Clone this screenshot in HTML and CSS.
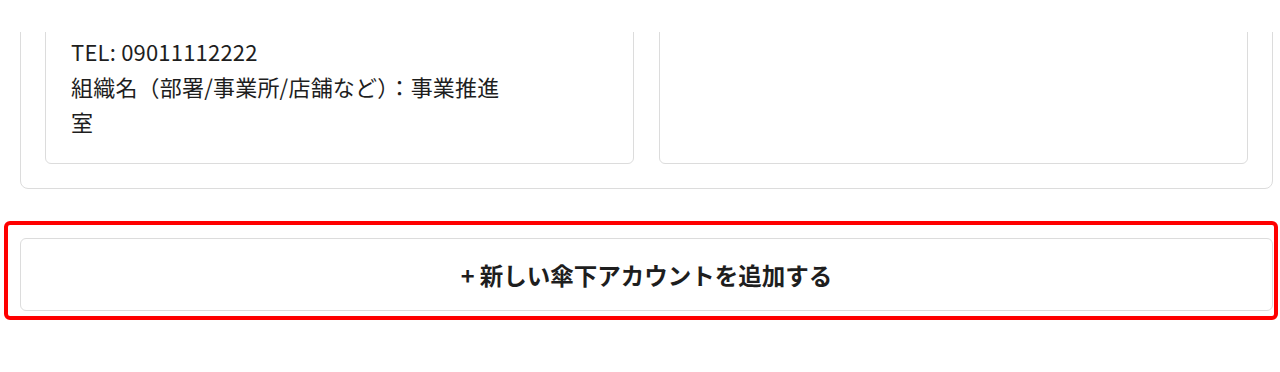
FILE: index.html
```html
<!DOCTYPE html>
<html lang="ja">
<head>
    <meta charset="UTF-8">
    <meta name="viewport" content="width=device-width, initial-scale=1.0">
    <title>傘下アカウント</title>
    <link rel="stylesheet" href="styles.css">
</head>
<body>
    <div class="topbar"></div>

    <div class="page">
        <div class="group">
            <div class="account-card">
                <p class="info">TEL: 09011112222</p>
                <p class="info wrap">組織名（部署/事業所/店舗など）：事業推進室</p>
            </div>
            <div class="account-card"></div>
        </div>

        <div class="add-wrap">
            <button class="add-btn" type="button">+ 新しい傘下アカウントを追加する</button>
            <div class="highlight"></div>
        </div>
    </div>
</body>
</html>
```

FILE: styles.css
```css
body {
    font-family: "Noto Sans CJK JP", "Noto Sans", sans-serif;
    margin: 0;
    padding: 0;
    background: #fff;
    color: #1e1e1e;
}
.topbar {
    position: fixed;
    top: 0;
    left: 0;
    right: 0;
    height: 32px;
    background: #fff;
    z-index: 10;
}
.page {
    padding: 0 7px 60px 20px;
}
.group {
    margin-top: -16px;
    border: 1px solid #dcdcdc;
    border-radius: 8px;
    padding: 24px;
    display: grid;
    grid-template-columns: 1fr 1fr;
    gap: 25px;
}
.account-card {
    border: 1px solid #dcdcdc;
    border-radius: 6px;
    padding: 24px 25px;
}
.info {
    margin: 0;
    font-size: 22px;
    line-height: 35px;
    letter-spacing: 0.2px;
}
.wrap {
    max-width: 450px;
}
.add-wrap {
    position: relative;
    margin-top: 49px;
}
.add-btn {
    display: block;
    width: 100%;
    height: 73px;
    margin: 0;
    padding: 0;
    background: #fff;
    border: 1px solid #dcdcdc;
    border-radius: 6px;
    font-family: inherit;
    font-size: 23.5px;
    font-weight: bold;
    color: #1e1e1e;
    cursor: pointer;
}
.highlight {
    position: absolute;
    left: -16px;
    top: -17px;
    right: -5px;
    bottom: -9px;
    border: 4px solid #ff0000;
    border-radius: 6px;
    pointer-events: none;
}
```
